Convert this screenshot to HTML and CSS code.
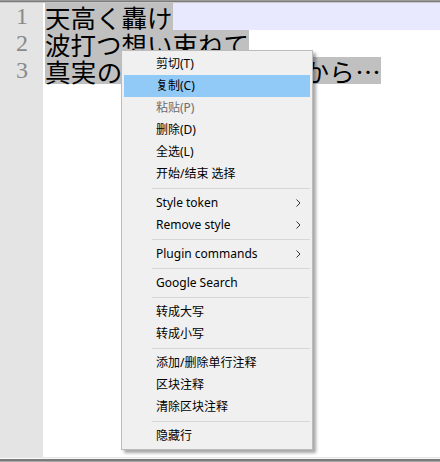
FILE: index.html
```html
<!DOCTYPE html>
<html lang="ja">
<head>
<meta charset="utf-8">
<link rel="stylesheet" href="styles.css">
</head>
<body>
<div class="window">
  <div class="topbar"></div>
  <div class="editor">
    <div class="gutter">
      <div class="ln">1</div>
      <div class="ln">2</div>
      <div class="ln">3</div>
    </div>
    <div class="code">
      <div class="line active"><span class="sel">天高く轟け</span></div>
      <div class="line"><span class="sel">波打つ想い束ねて</span></div>
      <div class="line"><span class="sel wide">真実の未来を信じ進むから…</span></div>
    </div>
  </div>
  <div class="bottombar"></div>

  <div class="menu">
    <div class="item">剪切(T)</div>
    <div class="item hover">复制(C)</div>
    <div class="item disabled">粘贴(P)</div>
    <div class="item">删除(D)</div>
    <div class="item">全选(L)</div>
    <div class="item">开始/结束 选择</div>
    <div class="sep"></div>
    <div class="item sub">Style token<svg class="arrow" width="5" height="8" viewBox="0 0 5 8"><polyline points="0.5,0.5 4,4 0.5,7.5" fill="none" stroke="#333" stroke-width="1"/></svg></div>
    <div class="item sub">Remove style<svg class="arrow" width="5" height="8" viewBox="0 0 5 8"><polyline points="0.5,0.5 4,4 0.5,7.5" fill="none" stroke="#333" stroke-width="1"/></svg></div>
    <div class="sep"></div>
    <div class="item sub">Plugin commands<svg class="arrow" width="5" height="8" viewBox="0 0 5 8"><polyline points="0.5,0.5 4,4 0.5,7.5" fill="none" stroke="#333" stroke-width="1"/></svg></div>
    <div class="sep"></div>
    <div class="item">Google Search</div>
    <div class="sep"></div>
    <div class="item">转成大写</div>
    <div class="item">转成小写</div>
    <div class="sep"></div>
    <div class="item">添加/删除单行注释</div>
    <div class="item">区块注释</div>
    <div class="item">清除区块注释</div>
    <div class="sep"></div>
    <div class="item">隐藏行</div>
  </div>
</div>
</body>
</html>
```
FILE: styles.css
```css
html, body {
  margin: 0;
  padding: 0;
  background: #fff;
}
.window {
  position: relative;
  width: 440px;
  height: 462px;
  display: flex;
  flex-direction: column;
  overflow: hidden;
}
.topbar {
  height: 3px;
  flex: none;
  background: linear-gradient(#9a9a9a 0, #9a9a9a 1px, #7c7c7c 1px, #7c7c7c 2px, #c8c8c8 2px);
}
.editor {
  flex: 1;
  display: flex;
  min-height: 0;
}
.gutter {
  width: 44px;
  flex: none;
  background: #e4e4e4;
  border-right: 1px solid #fff;
  box-sizing: border-box;
}
.ln {
  height: 27px;
  line-height: 27px;
  text-align: center;
  font-family: "Liberation Serif", serif;
  font-size: 24px;
  color: #8a8a8a;
  padding-left: 1px;
}
.code {
  flex: 1;
  padding-left: 1px;
}
.line {
  height: 27px;
  line-height: 27px;
  font-family: "Noto Sans CJK JP", sans-serif;
  font-size: 25.5px;
  color: #000;
  white-space: nowrap;
}
.line.active {
  background: #e8e8ff;
}
.sel {
  background: #c0c0c0;
  display: inline-block;
  height: 27px;
}
.sel.wide {
  letter-spacing: 0.35px;
}
.bottombar {
  height: 5px;
  flex: none;
  background: linear-gradient(#e6e6e6 0, #e6e6e6 1px, #f8f8f8 1px, #f8f8f8 2px, #7a7a7a 2px, #7a7a7a 4px, #a8a8a8 4px);
}
.menu {
  position: absolute;
  left: 121px;
  top: 50px;
  width: 192px;
  box-sizing: border-box;
  background: #f0f0f0;
  border: 1px solid #bcbcbc;
  padding: 2px 2px 2px 2px;
  box-shadow: 3px 3px 3px rgba(0, 0, 0, 0.35);
  font-family: "Noto Sans", "Noto Sans CJK SC", sans-serif;
  font-size: 12px;
  color: #000;
}
.item {
  height: 22px;
  line-height: 22px;
  padding-left: 32px;
  display: flex;
  align-items: center;
  white-space: nowrap;
}
.item.hover {
  background: #91c9f7;
}
.item.disabled {
  color: #6d6d6d;
}
.item.sub {
  justify-content: space-between;
  padding-right: 9px;
}
.arrow {
  display: block;
}
.sep {
  height: 7px;
  display: flex;
  align-items: center;
  padding-left: 28px;
}
.sep::before {
  content: "";
  flex: 1;
  height: 1px;
  background: #d7d7d7;
}
```
